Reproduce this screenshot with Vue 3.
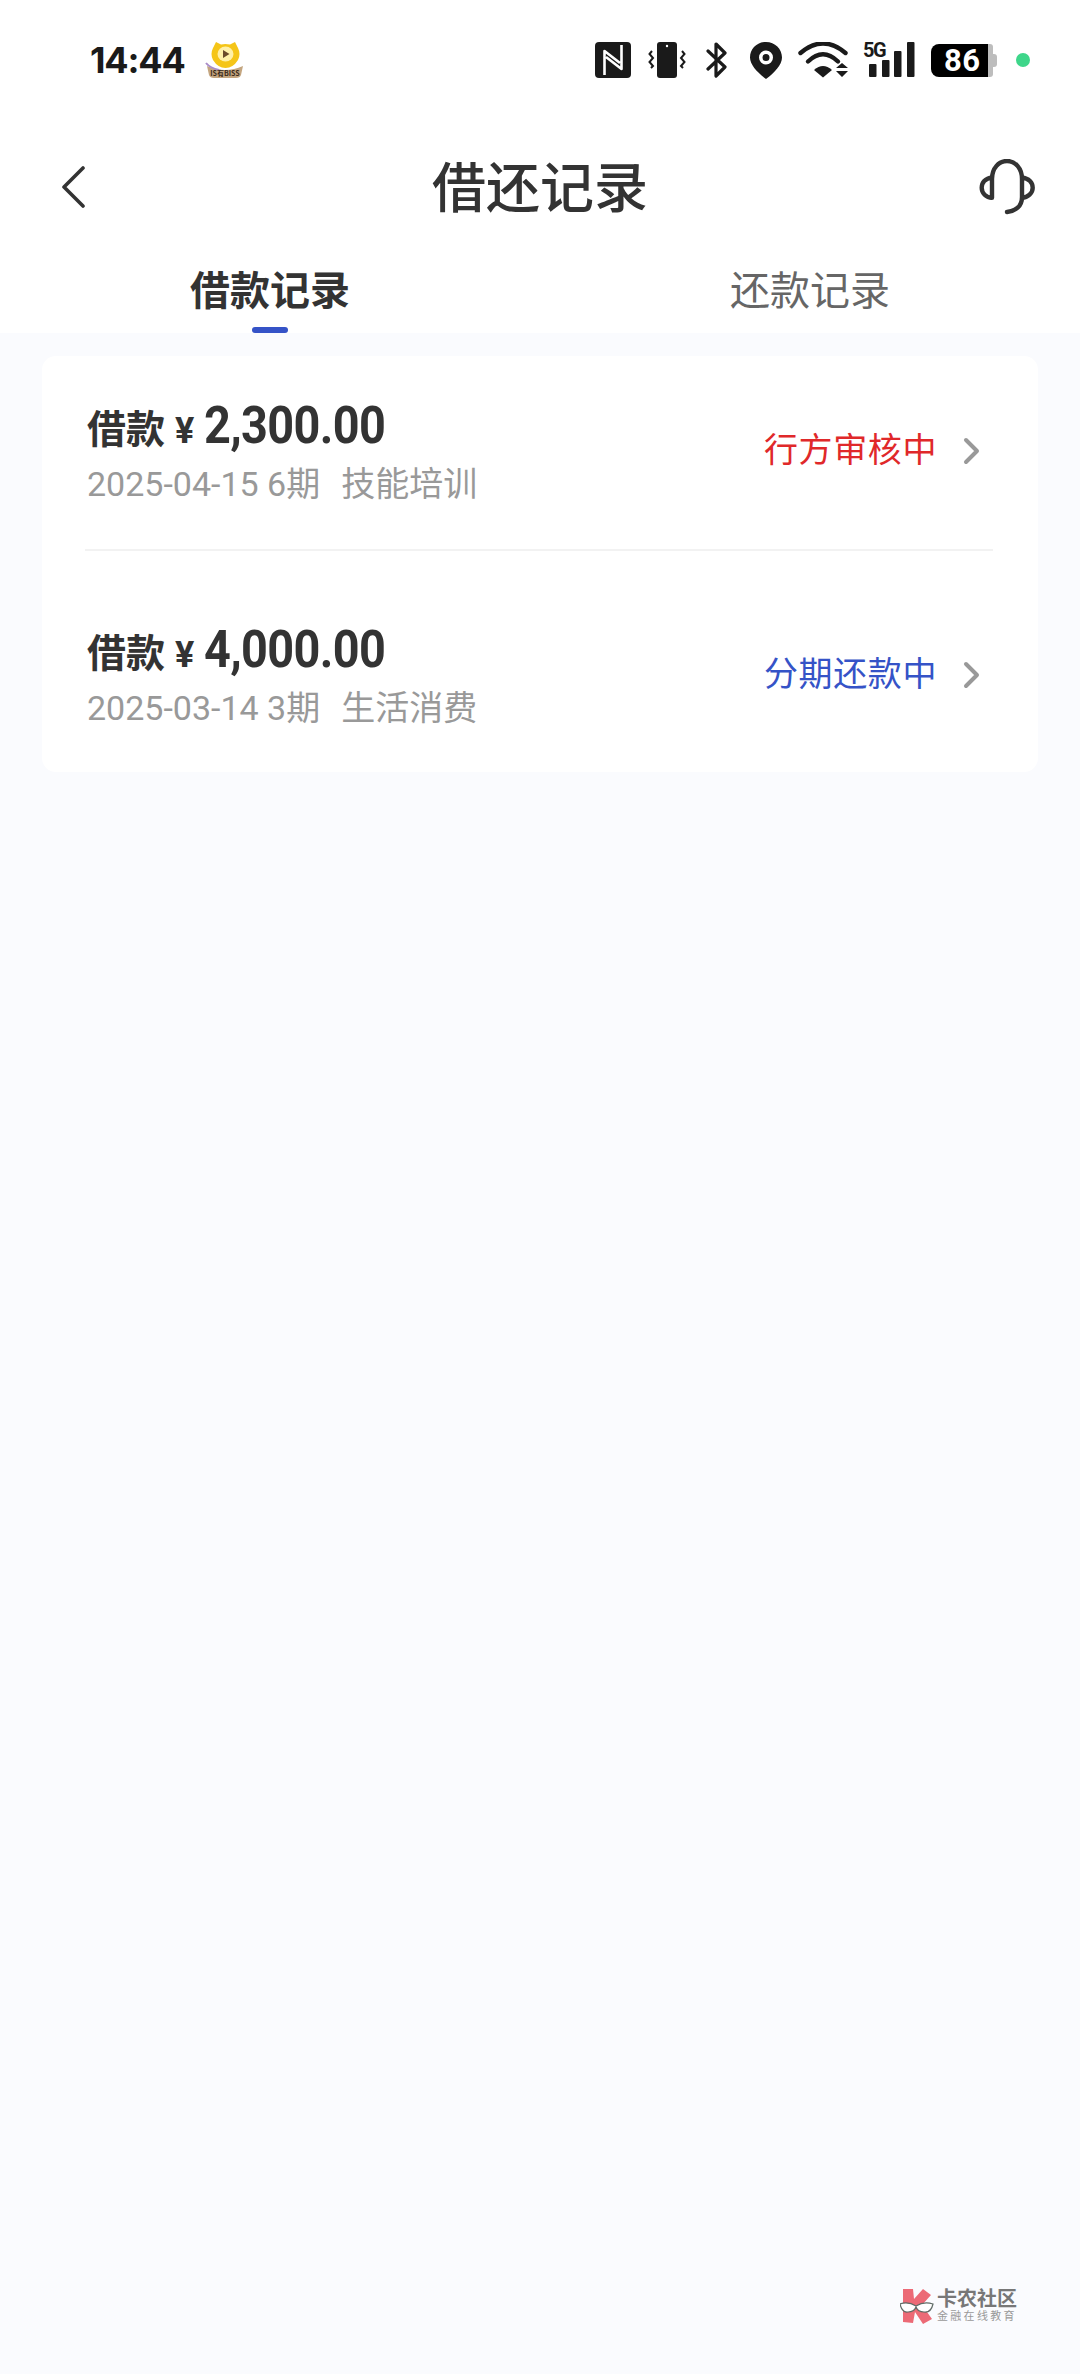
<template>
  <div class="page">
    <div class="status-bar">
      <div class="status-left">
        <span class="time">14:44</span>
        <svg class="app-icon" width="40" height="40" viewBox="0 0 40 40">
          <path d="M2 26 Q20 34 38 26 L36 35 Q35 38 31 38 L9 38 Q5 38 4 35 Z" fill="#c4a680" />
          <path d="M1 23 Q5 28 14 30" fill="none" stroke="#a98cc8" stroke-width="2" />
          <path d="M8 8 L11 2 L16 4.5 Q20 3.5 25 4.5 L30 2 L33 8 Q36 14 33 20 Q28 28 20.5 28 Q13 28 8 20 Q5 14 8 8 Z" fill="#f5c518" />
          <ellipse cx="20.5" cy="14" rx="8" ry="7.5" fill="#fff0a8" />
          <path d="M18 10 L24.5 14 L18 18 Z" fill="#6b4a2a" />
          <text class="app-icon-text" x="20" y="36" text-anchor="middle">IS有BISS</text>
        </svg>
      </div>
      <div class="status-right">
        <svg width="36" height="36" viewBox="0 0 36 36">
          <rect width="36" height="36" rx="4" fill="#1a1a1a" />
          <path d="M9.5 33 L9.5 9 L25 21 M26.5 3 L26.5 27 L11 15" fill="none" stroke="#fff" stroke-width="2.6" stroke-linejoin="round" />
        </svg>
        <svg class="vibrate" width="38" height="36" viewBox="0 0 38 36">
          <rect x="9" y="0" width="20" height="36" rx="3" fill="#1a1a1a" />
          <circle cx="19" cy="4" r="1.2" fill="#fff" />
          <path d="M4 9 L1.5 12 L5 16 L1.5 20 L5 24 L3 26" fill="none" stroke="#1a1a1a" stroke-width="2" />
          <path d="M34 9 L36.5 12 L33 16 L36.5 20 L33 24 L35 26" fill="none" stroke="#1a1a1a" stroke-width="2" />
        </svg>
        <svg class="bluetooth" width="22" height="36" viewBox="0 0 22 36">
          <path d="M2 9 L19 25 L10 34 L10 2 L19 11 L2 27" fill="none" stroke="#1a1a1a" stroke-width="3.2" stroke-linecap="round" stroke-linejoin="round" />
        </svg>
        <svg class="pin" width="32" height="37" viewBox="0 0 32 37">
          <path fill-rule="evenodd" d="M16 0 C25 0 32 7 32 15.5 C32 23 24 31 16 37 C8 31 0 23 0 15.5 C0 7 7 0 16 0 Z M16 8.5 A7 7 0 1 0 16 22.5 A7 7 0 1 0 16 8.5 Z M16 12 A3.5 3.5 0 1 1 16 19 A3.5 3.5 0 1 1 16 12 Z" fill="#1a1a1a" />
        </svg>
        <svg class="wifi" width="52" height="36" viewBox="0 0 52 36">
          <path d="M2.5 11 Q25 -8 47.5 11" fill="none" stroke="#1a1a1a" stroke-width="4.4" stroke-linecap="round" />
          <path d="M10 19.5 Q25 5 40 19.5" fill="none" stroke="#1a1a1a" stroke-width="4.4" stroke-linecap="round" />
          <path d="M16 28 Q25 20 34 28 L25 35.5 Z" fill="#1a1a1a" />
          <path d="M38 26 L44 21 L50 26 Z M38 29 L50 29 L44 35 Z" fill="#1a1a1a" />
        </svg>
        <div class="signal">
          <svg width="52" height="36" viewBox="0 0 52 36">
            <rect x="6" y="22" width="7.5" height="13" rx="1" fill="#1a1a1a" />
            <rect x="19" y="18" width="7.5" height="17" rx="1" fill="#1a1a1a" />
            <rect x="31" y="9" width="7.5" height="26" rx="1" fill="#1a1a1a" />
            <rect x="44" y="0" width="7.5" height="35" rx="1" fill="#1a1a1a" />
          </svg>
          <span class="five-g">5G</span>
        </div>
        <div class="battery">
          <span class="battery-body">86</span>
          <span class="battery-cap"></span>
        </div>
        <span class="green-dot"></span>
      </div>
    </div>

    <div class="nav-bar">
      <svg class="back" width="24" height="42" viewBox="0 0 24 42">
        <path d="M22 2 L3 21 L22 40" fill="none" stroke="#333" stroke-width="3.6" stroke-linecap="round" stroke-linejoin="round" />
      </svg>
      <h1 class="title">借还记录</h1>
      <svg class="headset" width="56" height="56" viewBox="0 0 56 56">
        <path d="M13 38.7 V20 C13 9 20 2 28 2 C36 2 43 9 43 20 V38 C43 47 37 52 28 53" fill="none" stroke="#333" stroke-width="4.4" stroke-linecap="round" />
        <path d="M13 18.7 C6 19 2.7 24 2.7 28.7 C2.7 34 7 38.7 13 38.7" fill="none" stroke="#333" stroke-width="4.4" />
        <path d="M43 18.7 C50 19 53.7 24 53.7 28.7 C53.7 34 49 38.7 43 38.7" fill="none" stroke="#333" stroke-width="4.4" />
      </svg>
    </div>

    <div class="tabs">
      <div v-for="(tab, i) in tabs" :key="tab" class="tab" :class="{ active: i === 0 }">
        {{ tab }}
        <span v-if="i === 0" class="tab-line"></span>
      </div>
    </div>

    <div class="content">
      <div class="card">
        <div v-for="item in records" :key="item.date" class="record">
          <div class="record-info">
            <div class="record-amount">
              <span class="label">借款</span>
              <span class="yen">¥</span>
              <span class="amount">{{ item.amount }}</span>
            </div>
            <div class="record-meta">{{ item.date }} {{ item.term }}<span class="purpose">{{ item.purpose }}</span></div>
          </div>
          <div class="record-status" :class="item.type">{{ item.status }}</div>
          <svg class="chevron" width="18" height="28" viewBox="0 0 18 28">
            <path d="M3 3 L14 14 L3 25" fill="none" stroke="#999" stroke-width="4" stroke-linecap="round" stroke-linejoin="round" />
          </svg>
        </div>
      </div>

      <div class="watermark">
        <svg width="34" height="36" viewBox="0 0 34 36">
          <path d="M3 1 L13 1 L14 11 L23 1 L31 7 L22 17 L32 31 L23 36 L15 24 L13 35 L3 34 Z" fill="#ec6a76" />
          <path d="M0 16 Q8 13 16 18 Q24 13 33 16 Q31 25 24 24 Q18 24 16 19 Q14 24 8 24 Q2 25 0 16 Z" fill="#fff" stroke="#5f6b66" stroke-width="1.2" />
        </svg>
        <div class="watermark-text">
          <div class="watermark-name">卡农社区</div>
          <div class="watermark-sub">金融在线教育</div>
        </div>
      </div>
    </div>
  </div>
</template>

<script setup>
const tabs = ['借款记录', '还款记录']

const records = [
  { amount: '2,300.00', date: '2025-04-15', term: '6期', purpose: '技能培训', status: '行方审核中', type: 'review' },
  { amount: '4,000.00', date: '2025-03-14', term: '3期', purpose: '生活消费', status: '分期还款中', type: 'repay' }
]
</script>

<style>
html,
body {
  margin: 0;
  background: #fff;
}
</style>

<style scoped>
.page {
  width: 1080px;
  height: 2374px;
  display: flex;
  flex-direction: column;
  overflow: hidden;
  background: #fff;
  font-family: Roboto, "Noto Sans CJK SC", sans-serif;
  color: #333;
}

.status-bar {
  height: 120px;
  box-sizing: border-box;
  padding: 0 50px 0 90px;
  display: flex;
  align-items: center;
  justify-content: space-between;
}

.status-left {
  display: flex;
  align-items: center;
  gap: 20px;
}

.time {
  font-family: Inter, Roboto, sans-serif;
  font-size: 36px;
  font-weight: 700;
  letter-spacing: -1.2px;
  color: #1a1a1a;
}

.app-icon-text {
  font-family: "Noto Sans CJK SC", sans-serif;
  font-size: 7px;
  font-weight: 700;
  fill: #3a2a1a;
}

.status-right {
  display: flex;
  align-items: center;
}

.vibrate {
  margin-left: 17px;
}

.bluetooth {
  margin-left: 20px;
}

.pin {
  margin-left: 22px;
}

.wifi {
  margin-left: 16px;
}

.signal {
  position: relative;
  width: 52px;
  height: 36px;
  margin-left: 13px;
}

.five-g {
  position: absolute;
  left: 0;
  top: -2px;
  font-size: 20px;
  font-weight: 700;
  line-height: 20px;
  color: #1a1a1a;
  letter-spacing: -1.5px;
}

.battery {
  display: flex;
  align-items: center;
  margin-left: 16px;
}

.battery-body {
  width: 57px;
  height: 33px;
  box-sizing: border-box;
  padding-left: 13px;
  border-radius: 8px 0 0 8px;
  background: #000;
  color: #fff;
  font-size: 31px;
  font-weight: 700;
  line-height: 33px;
  letter-spacing: 0.5px;
}

.battery-cap {
  position: relative;
  width: 5px;
  height: 33px;
  margin-right: 4px;
  border-radius: 0 3px 3px 0;
  background: #bdbdbd;
}

.battery-cap::after {
  content: "";
  position: absolute;
  left: 5px;
  top: 10px;
  width: 4px;
  height: 13px;
  border-radius: 0 3px 3px 0;
  background: #bdbdbd;
}

.green-dot {
  width: 14px;
  height: 14px;
  margin-left: 19px;
  border-radius: 50%;
  background: #3ed68a;
}

.nav-bar {
  height: 136px;
  box-sizing: border-box;
  padding: 3px 45px 0;
  display: grid;
  grid-template-columns: 1fr auto 1fr;
  align-items: center;
}

.back {
  margin: 0 0 6px 16px;
}

.headset {
  justify-self: end;
  margin-bottom: 6px;
}

.title {
  margin: 0;
  font-size: 54px;
  font-weight: 500;
  line-height: 76px;
  color: #333;
}

.tabs {
  height: 77px;
  display: flex;
}

.tab {
  position: relative;
  flex: 1;
  text-align: center;
  font-size: 40px;
  line-height: 72px;
  color: #666;
}

.tab.active {
  font-weight: 700;
  color: #333;
}

.tab-line {
  position: absolute;
  left: 50%;
  bottom: 0;
  width: 36px;
  height: 6px;
  margin-left: -18px;
  border-radius: 3px;
  background: #3553c7;
}

.content {
  position: relative;
  flex: 1;
  padding: 23px 42px 0;
  background: #fafbfe;
}

.card {
  display: flex;
  flex-direction: column;
  padding: 0 45px 0 43px;
  border-radius: 14px;
  background: #fff;
}

.record {
  display: flex;
  align-items: center;
  padding: 39px 12px 42px 2px;
}

.record + .record {
  padding-top: 68px;
  padding-bottom: 41px;
  border-top: 2px solid #f2f2f2;
}

.record-info {
  flex: 1;
}

.record-amount {
  display: flex;
  align-items: baseline;
  height: 62px;
  color: #333;
  font-weight: 700;
}

.label {
  font-size: 39px;
}

.yen {
  margin-left: 10px;
  font-size: 36px;
}

.amount {
  display: inline-block;
  margin-left: 10px;
  font-size: 52px;
  letter-spacing: -0.7px;
  transform: scaleX(0.9);
  transform-origin: left center;
}

.record-meta {
  margin-top: 4px;
  font-size: 34px;
  line-height: 46px;
  color: #999;
}

.purpose {
  margin-left: 21px;
}

.record-status {
  margin-bottom: 3px;
  font-size: 34px;
  line-height: 46px;
  letter-spacing: 0.6px;
}

.record-status.review {
  color: #e0282a;
}

.record-status.repay {
  color: #3553c7;
}

.chevron {
  margin-left: 26px;
}

.watermark {
  position: absolute;
  left: 900px;
  top: 1955px;
  display: flex;
  align-items: center;
  gap: 3px;
}

.watermark-name {
  font-size: 20px;
  font-weight: 700;
  line-height: 22px;
  color: #777;
}

.watermark-sub {
  font-size: 11px;
  line-height: 14px;
  letter-spacing: 2.3px;
  color: #999;
}
</style>
